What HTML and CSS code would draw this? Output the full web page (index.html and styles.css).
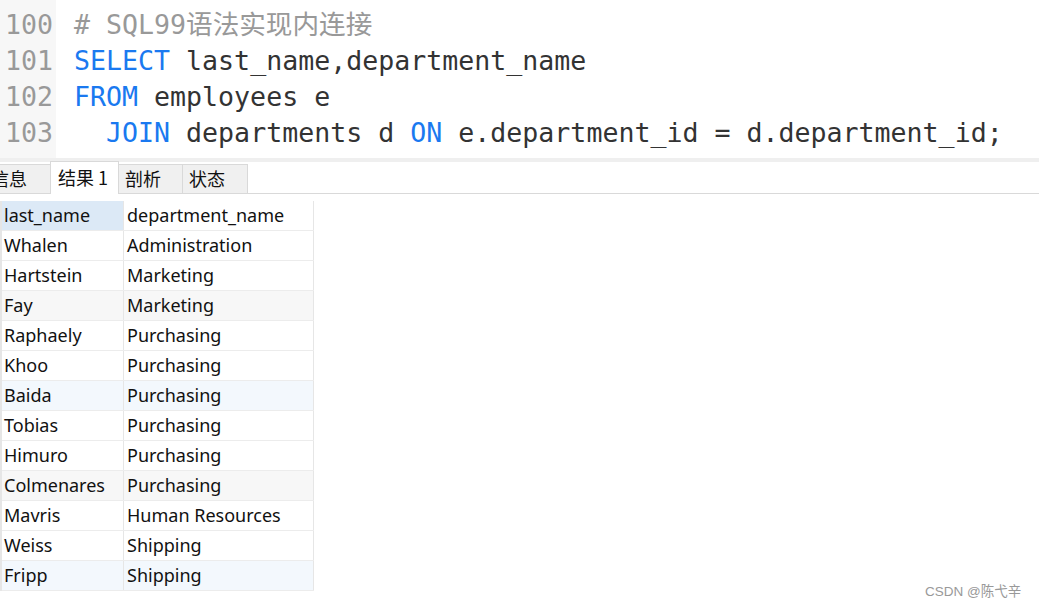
FILE: index.html
```html
<!DOCTYPE html>
<html>
<head>
<meta charset="utf-8">
<link rel="stylesheet" href="styles.css">
</head>
<body>
<div class="editor">
  <div class="gutter">
    <div class="ln">100</div>
    <div class="ln">101</div>
    <div class="ln">102</div>
    <div class="ln">103</div>
  </div>
  <div class="code">
    <div class="line"><span class="cm"># SQL99语法实现内连接</span></div>
    <div class="line"><span class="kw">SELECT</span> last_name,department_name</div>
    <div class="line"><span class="kw">FROM</span> employees e</div>
    <div class="line">  <span class="kw">JOIN</span> departments d <span class="kw">ON</span> e.department_id = d.department_id;</div>
  </div>
</div>
<div class="sep"></div>
<div class="tabs">
  <div class="tab first"><span class="cut">信息</span></div>
  <div class="tab active">结果 1</div>
  <div class="tab">剖析</div>
  <div class="tab">状态</div>
</div>
<div class="grid">
  <div class="row head"><div class="c1 sel">last_name</div><div class="c2">department_name</div></div>
  <div class="row"><div class="c1">Whalen</div><div class="c2">Administration</div></div>
  <div class="row"><div class="c1">Hartstein</div><div class="c2">Marketing</div></div>
  <div class="row grey"><div class="c1">Fay</div><div class="c2">Marketing</div></div>
  <div class="row"><div class="c1">Raphaely</div><div class="c2">Purchasing</div></div>
  <div class="row"><div class="c1">Khoo</div><div class="c2">Purchasing</div></div>
  <div class="row blue"><div class="c1">Baida</div><div class="c2">Purchasing</div></div>
  <div class="row"><div class="c1">Tobias</div><div class="c2">Purchasing</div></div>
  <div class="row"><div class="c1">Himuro</div><div class="c2">Purchasing</div></div>
  <div class="row grey"><div class="c1">Colmenares</div><div class="c2">Purchasing</div></div>
  <div class="row"><div class="c1">Mavris</div><div class="c2">Human Resources</div></div>
  <div class="row"><div class="c1">Weiss</div><div class="c2">Shipping</div></div>
  <div class="row blue"><div class="c1">Fripp</div><div class="c2">Shipping</div></div>
</div>
<div class="watermark">CSDN @陈弋辛</div>
</body>
</html>
```
FILE: styles.css
```css
* { box-sizing: border-box; }
html, body { margin: 0; padding: 0; background: #fff; }
body { width: 1039px; height: 605px; overflow: hidden; position: relative; }

.editor {
  display: flex;
  height: 158px;
  font-family: "DejaVu Sans Mono", "Noto Sans CJK SC", monospace;
  font-size: 26.6px;
}
.gutter {
  width: 56px;
  background: #f7f7f7;
  padding-top: 7px;
  padding-left: 5px;
  color: #999;
}
.code {
  padding-top: 7px;
  padding-left: 18px;
  color: #333;
}
.ln, .line { height: 36px; line-height: 36px; white-space: pre; }
.kw { color: #1a79f0; }
.cm { color: #999; }

.sep { height: 4px; background: #efefef; }

.tabs {
  display: flex;
  align-items: flex-end;
  height: 32px;
  border-bottom: 1px solid #d9d9d9;
  font-family: "Noto Sans CJK SC", sans-serif;
  font-size: 18px;
  color: #111;
}
.tab {
  height: 29px;
  line-height: 27px;
  background: #f0f0f0;
  border: 1px solid #d9d9d9;
  border-bottom: none;
  border-left: none;
  padding-left: 6px;
  width: 64px;
  white-space: nowrap;
}
.tab.first { width: 50px; padding-left: 0; overflow: hidden; border-right: none; }
.tab.first .cut { display: inline-block; margin-left: -9px; }
.tab.active {
  background: #fff;
  height: 33px;
  line-height: 30px;
  width: 69px;
  border-left: 1px solid #d9d9d9;
  margin-bottom: -1px;
  padding-left: 7px;
}
.tab:last-child { width: 65px; }

.grid {
  margin-top: 7px;
  width: 314px;
  border-left: 2px solid #e6e6e6;
  font-family: "Noto Sans", "Open Sans", sans-serif;
  font-size: 18px;
  color: #111;
}
.row { display: flex; height: 30px; border-bottom: 1px solid #ececec; }
.row.grey { background: #f7f7f7; }
.row.blue { background: #f3f8fd; }
.c1, .c2 { line-height: 28px; padding-left: 2px; border-right: 1px solid #e6e6e6; white-space: nowrap; }
.c1 { width: 122px; }
.c2 { width: 190px; padding-left: 3px; }
.c1.sel { background: #dce9f6; }

.watermark {
  position: absolute;
  left: 925px;
  top: 580px;
  font-family: "Liberation Sans", "Noto Sans CJK SC", sans-serif;
  font-size: 13.5px;
  color: #999;
}
```
